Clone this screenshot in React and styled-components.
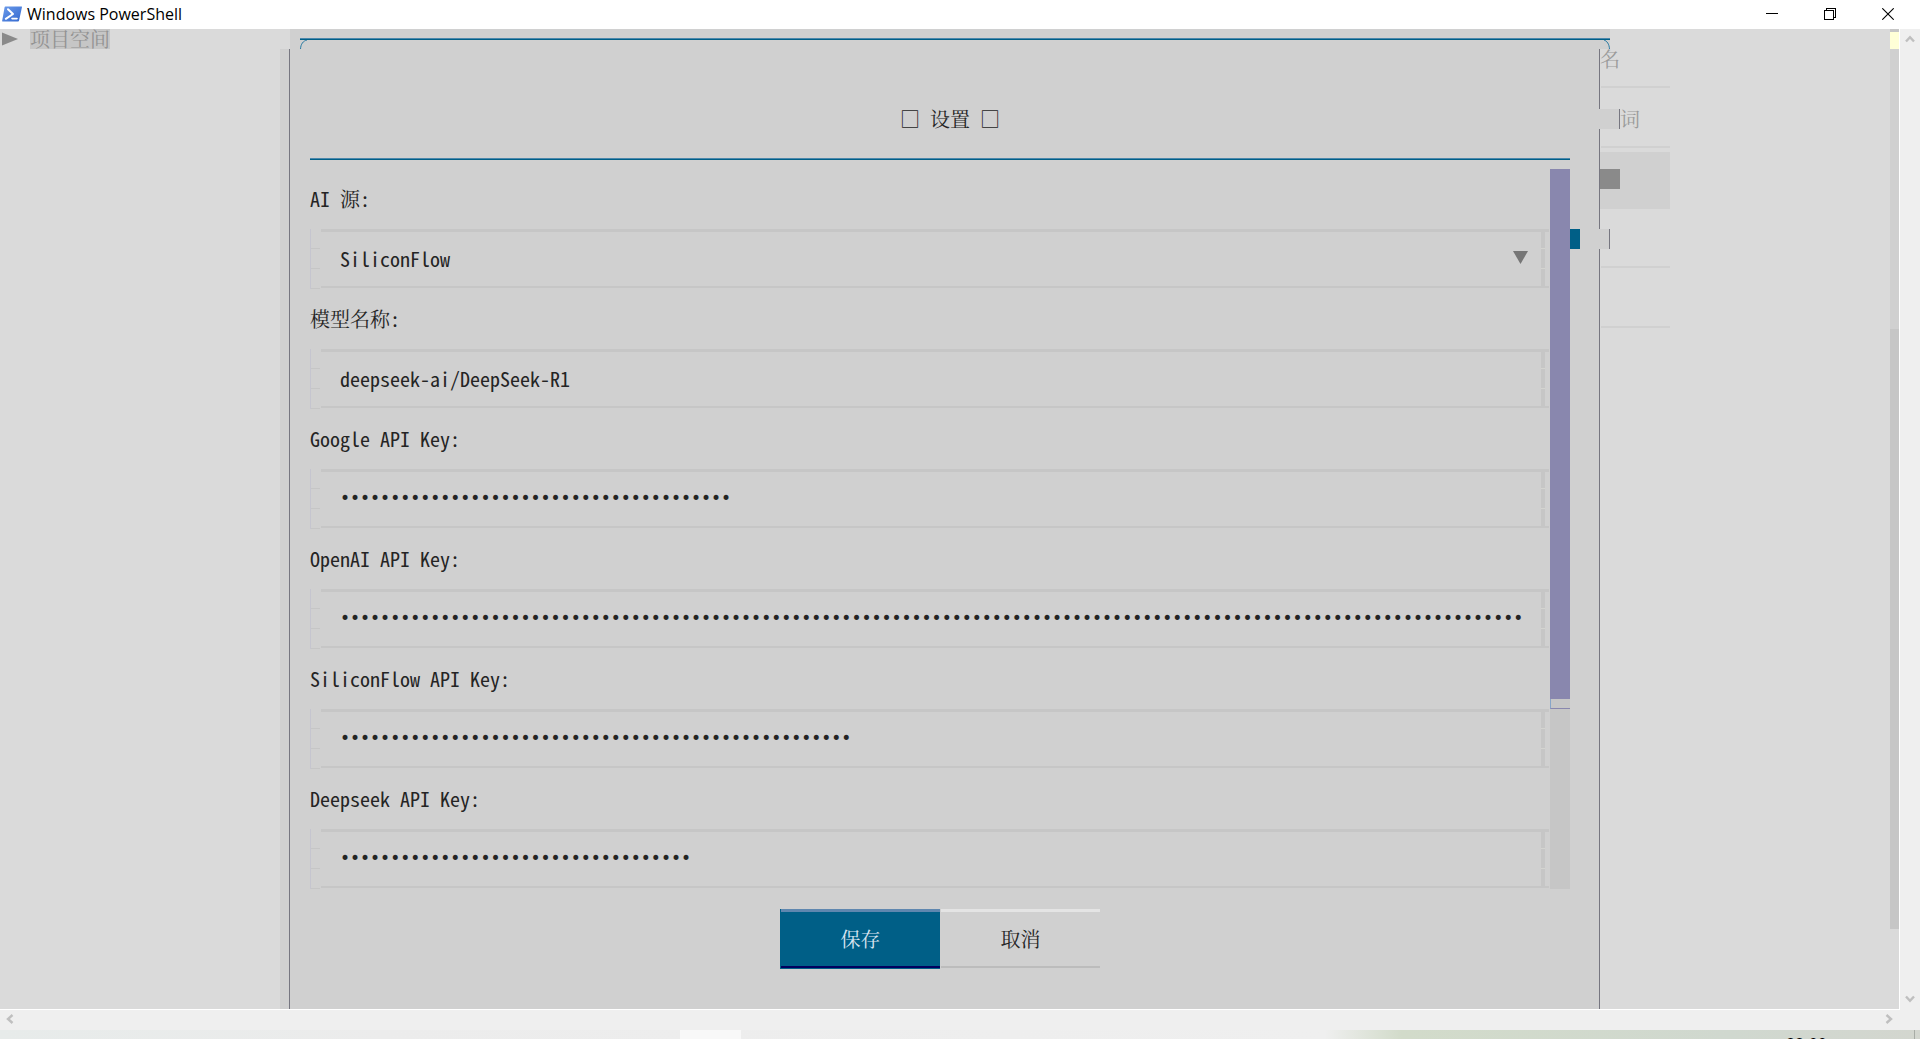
import React from "react";
import styled, { createGlobalStyle } from "styled-components";

const MONO = `"Noto Sans Mono CJK SC", "Noto Sans CJK SC", "Liberation Mono", monospace`;
const SONG = `"Noto Serif CJK SC", "Noto Sans CJK SC", serif`;
const UI = `"Open Sans", "Noto Sans", sans-serif`;

const GlobalStyle = createGlobalStyle`
  *, *::before, *::after { box-sizing: border-box; }
  body { margin: 0; background: #efefef; }
  button, input, select { border: 0; margin: 0; padding: 0; background: none; border-radius: 0; outline: 0; }
`;

const Window = styled.div`
  display: flex;
  flex-direction: column;
  min-height: 100vh;
  overflow: hidden;
  font: 20px/20px ${MONO};
  color: #242424;
`;

/* Title bar */
const TitleBar = styled.header`
  display: flex;
  align-items: center;
  height: 29px;
  padding: 0 3px 2px 2px;
  background: #fff;
  color: #000;
`;
const AppName = styled.h1`
  flex: 1;
  margin: 0 0 0 5px;
  font: 400 16px/26px ${UI};
`;
const CaptionButton = styled.button`
  display: grid;
  place-items: center;
  width: 58px;
  height: 26px;
`;

/* Console */
const Console = styled.div`
  display: flex;
  flex: 1;
`;
const Terminal = styled.main`
  display: flex;
  flex: 1;
  min-width: 0;
  border-right: 1px solid #fff;
  border-bottom: 1px solid #fff;
  background: #dadada;
`;
const Screen = styled.div`
  display: flex;
  flex-direction: column;
  flex: 1;
  min-width: 0;
`;
const TopRow = styled.div`
  display: flex;
  height: 20px;
`;
const TreeNode = styled.div`
  display: flex;
  align-items: center;
  width: 290px;
  padding-left: 2px;
  gap: 12px;
`;
const NodeLabel = styled.span`
  height: 20px;
  background: #c6c6c6;
  color: #939393;
  font: 20px/20px ${SONG};
`;
const DialogEdge = styled.div`
  flex: 1;
  padding: 9px 0 0 10px;
  background: #d0d0d0;
`;
const Rule = styled.hr`
  height: 2px;
  margin: 0;
  border: 0;
  background: linear-gradient(#4b87ab 1px, #005f87 1px);
`;
const Corners = styled.div`
  display: flex;
  justify-content: space-between;
`;
const Beyond = styled.div`
  width: 280px;
`;
const MainRow = styled.div`
  display: flex;
  flex: 1;
`;
const Sidebar = styled.aside`
  width: 289px;
  border-right: 9px solid #d0d0d0;
`;

/* Settings dialog */
const Dialog = styled.form`
  display: flex;
  flex-direction: column;
  flex: 1;
  min-width: 0;
  padding: 0 29px 0 20px;
  border-left: 1px solid #767680;
  background: #d0d0d0;
`;
const DialogTitle = styled.h2`
  margin: 0;
  padding: 60px 0 29px 20px;
  font: 400 20px/20px ${MONO};
  text-align: center;
`;
const Cjk = styled.span`
  font-family: ${SONG};
`;
const DialogBody = styled.div`
  display: flex;
  height: 720px;
  margin: 9px -29px 20px 0;
`;
const Fields = styled.div`
  flex: 1;
  min-width: 0;
`;
const FieldLabel = styled.label`
  display: block;
  height: 60px;
  font: 20px/59px ${MONO};
  white-space: pre;
`;
const Frame = styled.div`
  display: flex;
  gap: 1px;
  height: 60px;
  padding-right: 1px;
`;
const Ticks = styled.span`
  width: 10px;
  border-left: 1px solid #c5c5cf;
  background: repeating-linear-gradient(transparent 0 19px, #c6c6c6 19px 20px);
`;
const Box = styled.div`
  display: flex;
  flex: 1;
  align-items: stretch;
  min-width: 0;
  height: 59px;
  padding: 0 4px 0 19px;
  border-top: 3px solid #c6c6c6;
  border-bottom: 2px solid #c6c6c6;
`;
const EdgeBar = styled.span`
  width: 4px;
  background: repeating-linear-gradient(#c6c6c6 0 19px, #d4d4d0 19px 20px) 0 -3px / 4px 60px;
`;
const Input = styled.input`
  flex: 1;
  min-width: 0;
  padding-bottom: 2px;
  color: #242424;
  font: ${(p) => (p.type === "password" ? '17px "DejaVu Sans", sans-serif' : `20px ${MONO}`)};
`;
const Select = styled.select`
  flex: 1;
  min-width: 0;
  appearance: none;
  color: #242424;
  padding-bottom: 2px;
  font: 20px ${MONO};
`;
const Arrow = styled.svg`
  align-self: center;
  margin: 0 13px 4px 0;
`;
const Scroll = styled.div`
  display: flex;
  flex-direction: column;
  width: 20px;
  background: #c6c6c6;
`;
const Thumb = styled.div`
  height: 530px;
  background: #8987ae;
`;
const ThumbEnd = styled.div`
  height: 10px;
  border-left: 1px solid #87a5c9;
  border-bottom: 1px solid #8987ae;
`;
const Gutter = styled.div`
  width: 29px;
  padding-top: 60px;
`;
const Marker = styled.div`
  width: 10px;
  height: 20px;
  background: #005f87;
`;
const Actions = styled.div`
  display: flex;
  justify-content: center;
  padding-bottom: 40px;
`;
const ActionButton = styled.button`
  width: 160px;
  height: 60px;
  color: ${(p) => (p.$primary ? "#d8e4f0" : "#242424")};
  font: 20px/52px ${SONG};
  border-bottom: 1px solid ${(p) => (p.$primary ? "#005f87" : "#d0d0d0")};
  border-left: 1px solid ${(p) => (p.$primary ? "#005f87" : "#d0d0d0")};
  background: ${(p) =>
    p.$primary
      ? "linear-gradient(#5f87af 3px, #005f87 3px 57px, #00005f 57px)"
      : "linear-gradient(#e4e4e4 3px, #d0d0d0 3px 57px, #bcbcbc 57px)"};
`;

/* Panel showing behind the dialog */
const Behind = styled.aside`
  display: flex;
  flex-direction: column;
  width: 291px;
  color: #9a9a9a;
`;
const Segment = styled.div`
  height: ${(p) => p.$h || "auto"};
  flex: ${(p) => (p.$h ? "none" : 1)};
  padding-top: ${(p) => p.$top || "0"};
  border-left: 1px solid #767680;
`;
const Notch = styled.div`
  display: flex;
  height: 20px;
`;
const NotchFill = styled.span`
  width: ${(p) => p.$w};
  background: #d0d0d0;
  border-right: 1px solid #767680;
`;
const Glyph = styled.div`
  height: 20px;
  font: 20px/20px ${SONG};
`;
const ItemLine = styled.div`
  width: 69px;
  height: 2px;
  margin: ${(p) => p.$gap} 0 0 1px;
  background: #d0d0d0;
`;
const ItemBox = styled.div`
  width: 70px;
  height: 57px;
  margin-top: 4px;
  padding-top: 17px;
  background: #d0d0d0;
`;
const ItemCursor = styled.div`
  width: 20px;
  height: 20px;
  background: #8a8a8a;
`;

/* Minimap column inside the terminal */
const Minimap = styled.div`
  width: 9px;
`;
const Band = styled.div`
  height: ${(p) => p.$h};
  background: ${(p) => p.$c};
`;

const VScroll = styled.div`
  display: flex;
  flex-direction: column;
  align-items: center;
  justify-content: space-between;
  width: 20px;
  padding: 6px 1px 7px 0;
`;
const HScroll = styled.div`
  display: flex;
  align-items: center;
  justify-content: space-between;
  height: 20px;
  padding: 0 27px 2px 6px;
`;
const ScrollButton = styled.button`
  display: block;
  line-height: 0;
`;
const Taskbar = styled.footer`
  display: flex;
  justify-content: space-between;
  height: 9px;
  padding: 0 5px 0 680px;
  overflow: hidden;
  background: linear-gradient(90deg, #e7ebea 0, #ececec 20%, #efefef 69%, #d2dbca 73%, #d0d8cf 90%, #d3d6cf 100%);
`;
const Task = styled.span`
  width: 61px;
  background: #f8f8f8;
`;
const Clock = styled.time`
  height: 26px;
  padding: 6px 87px 0 0;
  border-right: 1px solid #a8aca6;
  color: #000;
  font: 16px/16px ${UI};
`;

const chevrons = {
  up: ["0 0 10 8", "M1 6.5 5 2.2 9 6.5", 10, 8],
  down: ["0 0 10 8", "M1 1.5 5 5.8 9 1.5", 10, 8],
  left: ["0 0 8 10", "M6.5 1 2 5 6.5 9", 8, 10],
  right: ["0 0 8 10", "M1.5 1 6 5 1.5 9", 8, 10],
};
const ScrollArrow = ({ dir }) => {
  const [box, d, w, h] = chevrons[dir];
  return (
    <ScrollButton type="button" aria-label={`Scroll ${dir}`}>
      <svg width={w} height={h} viewBox={box}>
        <path d={d} fill="none" stroke="#bfbfbf" strokeWidth="2.4" />
      </svg>
    </ScrollButton>
  );
};

const PowerShellIcon = () => (
  <svg width="20" height="16" viewBox="0 0 20 16" aria-hidden="true">
    <defs>
      <linearGradient id="ps" x1="0" y1="0" x2="1" y2="1">
        <stop offset="0" stopColor="#6c9bea" />
        <stop offset="1" stopColor="#3268cf" />
      </linearGradient>
    </defs>
    <path d="M3.4.5H19.5a.5.5 0 0 1 .5.6L17 14.8a1 1 0 0 1-.9.7H.6a.5.5 0 0 1-.5-.6L2.6 1.2A.9.9 0 0 1 3.4.5Z" fill="url(#ps)" />
    <path d="M6 3.2 11 8 3.8 12.8" fill="none" stroke="#fff" strokeWidth="2" strokeLinejoin="round" strokeLinecap="round" />
    <path d="M10 12.6H15" stroke="#fff" strokeWidth="1.6" strokeLinecap="round" />
  </svg>
);

const keys = [
  ["google", "Google API Key:", 39],
  ["openai", "OpenAI API Key:", 118],
  ["siliconflow", "SiliconFlow API Key:", 51],
  ["deepseek", "Deepseek API Key:", 35],
];

const Field = ({ id, label, children }) => (
  <div>
    <FieldLabel htmlFor={id}>{label}</FieldLabel>
    <Frame>
      <Ticks />
      <Box>
        {children}
        <EdgeBar />
      </Box>
    </Frame>
  </div>
);

export default function App() {
  return (
    <Window>
      <GlobalStyle />
      <TitleBar>
        <PowerShellIcon />
        <AppName>Windows PowerShell</AppName>
        <CaptionButton type="button" aria-label="Minimize">
          <svg width="12" height="12" shapeRendering="crispEdges"><path d="M0 5.5H12" stroke="#000" /></svg>
        </CaptionButton>
        <CaptionButton type="button" aria-label="Restore">
          <svg width="12" height="12" shapeRendering="crispEdges">
            <path d="M.5 2.5H9.5V11.5H.5ZM2.5 2.5V.5H11.5V9.5H9.5" fill="none" stroke="#000" />
          </svg>
        </CaptionButton>
        <CaptionButton type="button" aria-label="Close">
          <svg width="12" height="12"><path d="M.3.3 11.7 11.7M11.7.3.3 11.7" stroke="#000" strokeWidth="1.1" /></svg>
        </CaptionButton>
      </TitleBar>

      <Console>
        <Terminal>
          <Screen>
            <TopRow>
              <TreeNode>
                <svg width="16" height="14"><path d="M0 0.5 16 7 0 13.5Z" fill="#8a8a8a" /></svg>
                <NodeLabel>项目空间</NodeLabel>
              </TreeNode>
              <DialogEdge>
                <Rule />
                <Corners>
                  <svg width="10" height="9"><path d="M.5 9C.8 4 3 1 7 0" fill="none" stroke="#2b7ba3" /></svg>
                  <svg width="10" height="9"><path d="M9.5 9C9.2 4 7 1 4 0" fill="none" stroke="#2b7ba3" /></svg>
                </Corners>
              </DialogEdge>
              <Beyond />
            </TopRow>
            <MainRow>
              <Sidebar />
              <Dialog onSubmit={(e) => e.preventDefault()}>
                <DialogTitle>□ <Cjk>设置</Cjk> □</DialogTitle>
                <Rule />
                <DialogBody>
                  <Fields>
                    <Field id="source" label={<>AI <Cjk>源</Cjk>:</>}>
                      <Select id="source" defaultValue="SiliconFlow">
                        <option>SiliconFlow</option>
                      </Select>
                      <Arrow width="15" height="13"><path d="M0 0H15L7.5 13Z" fill="#767676" /></Arrow>
                    </Field>
                    <Field id="model" label={<><Cjk>模型名称</Cjk>:</>}>
                      <Input id="model" type="text" defaultValue="deepseek-ai/DeepSeek-R1" />
                    </Field>
                    {keys.map(([id, label, length]) => (
                      <Field key={id} id={id} label={label}>
                        <Input id={id} type="password" defaultValue={"x".repeat(length)} />
                      </Field>
                    ))}
                  </Fields>
                  <Scroll>
                    <Thumb />
                    <ThumbEnd />
                  </Scroll>
                  <Gutter>
                    <Marker />
                  </Gutter>
                </DialogBody>
                <Actions>
                  <ActionButton type="submit" $primary>保存</ActionButton>
                  <ActionButton type="button">取消</ActionButton>
                </Actions>
              </Dialog>
              <Behind>
                <Segment $h="60px">
                  <Glyph>名</Glyph>
                  <ItemLine $gap="17px" />
                </Segment>
                <Notch>
                  <NotchFill $w="21px" />
                  <Glyph>词</Glyph>
                </Notch>
                <Segment $h="100px" $top="17px">
                  <ItemLine $gap="0" />
                  <ItemBox>
                    <ItemCursor />
                  </ItemBox>
                </Segment>
                <Notch>
                  <NotchFill $w="11px" />
                </Notch>
                <Segment $top="17px">
                  <ItemLine $gap="0" />
                  <ItemLine $gap="58px" />
                </Segment>
              </Behind>
            </MainRow>
          </Screen>
          <Minimap>
            <Band $h="3px" $c="#c6c6c6" />
            <Band $h="17px" $c="#ffffd7" />
            <Band $h="280px" $c="#d0d0d0" />
            <Band $h="600px" $c="#c6c6c6" />
          </Minimap>
        </Terminal>
        <VScroll>
          <ScrollArrow dir="up" />
          <ScrollArrow dir="down" />
        </VScroll>
      </Console>
      <HScroll>
        <ScrollArrow dir="left" />
        <ScrollArrow dir="right" />
      </HScroll>
      <Taskbar>
        <Task />
        <Clock>22:00</Clock>
      </Taskbar>
    </Window>
  );
}
